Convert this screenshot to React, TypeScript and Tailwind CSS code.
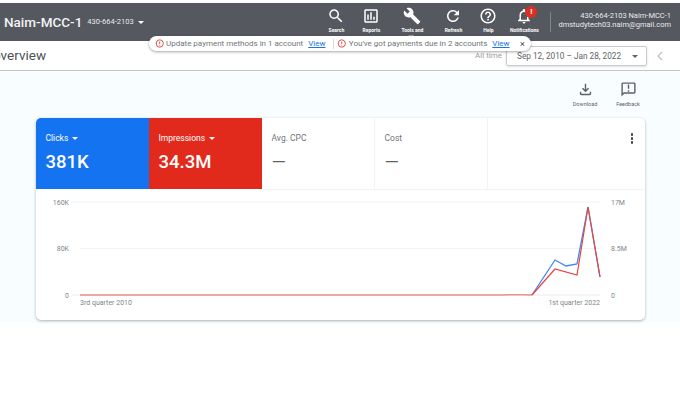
import { MdChevronLeft, MdClose, MdErrorOutline, MdHelpOutline, MdOutlineAnnouncement, MdOutlineAssessment, MdOutlineFileDownload, MdOutlineNotifications, MdBuild, MdRefresh, MdSearch } from "react-icons/md";

const navItems = [
  { label: "Search", icon: MdSearch, w: "w-[34px]" },
  { label: "Reports", icon: MdOutlineAssessment, w: "w-[36px]" },
  { label: "Tools and settings", icon: MdBuild, w: "w-[46px]" },
  { label: "Refresh", icon: MdRefresh, w: "w-[36px]" },
  { label: "Help", icon: MdHelpOutline, w: "w-[34px]" },
];

const Caret = ({ className }: { className: string }) => (
  <span className={`inline-block w-0 h-0 border-l-[3.5px] border-r-[3.5px] border-t-[3.5px] border-l-transparent border-r-transparent ${className}`} />
);

const Header = () => (
  <header className="h-[38px] mt-[3px] bg-[#55585f] flex items-center text-white shadow-sm">
    <div className="text-[13.5px] font-medium ml-[4px] text-[#f1f3f4]">Naim-MCC-1</div>
    <div className="text-[7.5px] ml-[5px] text-[#e8eaed]">430-664-2103</div>
    <Caret className="border-t-white ml-[4px]" />
    <nav className="flex items-start ml-auto self-start mt-[4px]">
      {navItems.map((item) => {
        const Icon = item.icon;
        return (
          <div key={item.label} className={`${item.w} flex flex-col items-center`}>
            <Icon className="w-[18px] h-[18px]" />
            <span className="w-[30px] text-center text-[5px] font-bold mt-[1.5px] leading-[7px]">{item.label}</span>
          </div>
        );
      })}
      <div className="relative w-[38px] flex flex-col items-center">
        <MdOutlineNotifications className="w-[18px] h-[18px]" />
        <span className="absolute top-[-1px] left-[20px] w-[12px] h-[12px] rounded-full bg-[#d93025] text-[8px] font-bold flex items-center justify-center">!</span>
        <span className="text-[5px] font-bold mt-[1.5px] leading-[7px]">Notifications</span>
      </div>
    </nav>
    <div className="w-px h-[20px] bg-[#80868b] mx-[7px]" />
    <div className="text-[7.5px] leading-[9px] text-right text-[#e8eaed] mr-[9px] mb-[4px]">
      <div>430-664-2103 Naim-MCC-1</div>
      <div>dmstudytech03.naim@gmail.com</div>
    </div>
  </header>
);

const SubBar = () => (
  <div className="relative h-[30px] bg-white border-b border-[#c4c6c9] flex items-center">
    <div className="text-[13.5px] text-[#4d5156] ml-[-7px]">overview</div>
    <div className="ml-auto flex items-center">
      <span className="text-[8px] text-[#9aa0a6] mr-[4px]">All time</span>
      <div className="w-[141px] h-[20px] mt-[1px] border border-[#c8cacc] rounded-[2px] shadow-sm flex items-center pl-[10px] pr-[8px] text-[8.25px] text-[#5f6368]">
        <span>Sep 12, 2010 – Jan 28, 2022</span>
        <Caret className="border-t-[#5f6368] ml-auto" />
      </div>
      <MdChevronLeft className="w-[18px] h-[18px] text-[#c4c7c9] ml-[4px] mr-[11px]" />
    </div>
    <div className="absolute left-[149px] top-[-5px] w-[382px] h-[15px] bg-white rounded-full shadow-[0_1px_3px_rgba(0,0,0,0.35)] flex items-center px-[5.5px] text-[8px] text-[#70757a] whitespace-nowrap">
      <MdErrorOutline className="w-[11px] h-[11px] text-[#d93025]" />
      <span className="ml-[2px]">Update payment methods in 1 account</span>
      <span className="ml-[5px] text-[#1a73e8] underline">View</span>
      <span className="w-px h-[10px] bg-[#dadce0] ml-[7px]" />
      <MdErrorOutline className="w-[11px] h-[11px] text-[#d93025] ml-[4px]" />
      <span className="ml-[2px]">You've got payments due in 2 accounts</span>
      <span className="ml-[5px] text-[#1a73e8] underline">View</span>
      <MdClose className="w-[8px] h-[8px] text-[#202124] ml-[9px]" />
    </div>
  </div>
);

const Tab = ({ label, value, bg, caret }: { label: string; value: string; bg: string; caret?: boolean }) => (
  <div className={`w-[113px] h-[71px] pl-[9.5px] pt-[15px] ${bg} ${caret ? "text-white" : "text-[#70757a] border-r border-[#f1f3f4]"}`}>
    <div className="flex items-center text-[8.5px] leading-[11px]">
      <span>{label}</span>
      {caret && <Caret className="border-t-white ml-[4px]" />}
    </div>
    <div className={`text-[18.5px] leading-[24px] mt-[6px] ${caret ? "font-medium" : "text-[#5f6368]"}`}>{value}</div>
  </div>
);

const AxisLabel = ({ y, anchor, x, text }: { y: number; anchor: "start" | "end" | "middle"; x: number; text: string }) => (
  <text x={x} y={y} textAnchor={anchor} fontSize="7" fill="#80868b" fontFamily="Roboto, sans-serif">{text}</text>
);

// drawn in page coords, viewBox starts at the card offset
const Chart = () => (
  <svg viewBox="36 189 609 131" className="block w-[609px] h-[131px]">
    <line x1="261" x2="645" y1="189.5" y2="189.5" stroke="#f1f3f4" />
    <line x1="72" x2="600" y1="202" y2="202" stroke="#f1f3f4" />
    <line x1="80" x2="600" y1="248.5" y2="248.5" stroke="#f1f3f4" />
    <line x1="72" x2="600" y1="295" y2="295" stroke="#e8eaed" />
    <polyline points="80,295 500,295 515,294.6 532,295" fill="none" stroke="#ec8f88" strokeWidth="1.4" />
    <polyline points="532,295 555,260 566,266 577,264 588,207 600,277" fill="none" stroke="#4285f4" strokeWidth="1.3" />
    <polyline points="532,295 555,269 577,275 588,207 600,277" fill="none" stroke="#e8453c" strokeWidth="1.2" />
    <AxisLabel x={69} y={204.5} anchor="end" text="160K" />
    <AxisLabel x={69} y={251} anchor="end" text="80K" />
    <AxisLabel x={69} y={297.5} anchor="end" text="0" />
    <AxisLabel x={611} y={204.5} anchor="start" text="17M" />
    <AxisLabel x={611} y={251} anchor="start" text="8.5M" />
    <AxisLabel x={611} y={297.5} anchor="start" text="0" />
    <AxisLabel x={80} y={305} anchor="start" text="3rd quarter 2010" />
    <AxisLabel x={600} y={305} anchor="end" text="1st quarter 2022" />
  </svg>
);

export default function App() {
  return (
    <div className="w-[680px] h-[409px] overflow-hidden bg-white" style={{ fontFamily: "Roboto, sans-serif" }}>
      <Header />
      <SubBar />
      <main className="h-[252px] bg-[#f8fdff] pt-[10px]">
        <div className="flex justify-end h-[37px] text-[#5f6368] pr-[29px]">
          <div className="w-[40px] flex flex-col items-center">
            <MdOutlineFileDownload className="w-[17px] h-[17px]" />
            <span className="text-[5.5px] mt-[2px]">Download</span>
          </div>
          <div className="w-[46px] flex flex-col items-center">
            <MdOutlineAnnouncement className="w-[17px] h-[17px]" />
            <span className="text-[5.5px] mt-[2px]">Feedback</span>
          </div>
        </div>
        <section className="ml-[36px] w-[609px] h-[202px] bg-white rounded-[5px] shadow-[0_1px_3px_rgba(60,64,67,0.4)] overflow-hidden">
          <div className="relative flex">
            <Tab label="Clicks" value="381K" bg="bg-[#1473f0]" caret />
            <Tab label="Impressions" value="34.3M" bg="bg-[#e1291c]" caret />
            <Tab label="Avg. CPC" value="—" bg="bg-white" />
            <Tab label="Cost" value="—" bg="bg-white" />
            <div className="absolute right-[12px] top-[15px] flex flex-col gap-[1.5px]">
              <span className="w-[2.5px] h-[2.5px] rounded-full bg-[#3c4043]" />
              <span className="w-[2.5px] h-[2.5px] rounded-full bg-[#3c4043]" />
              <span className="w-[2.5px] h-[2.5px] rounded-full bg-[#3c4043]" />
            </div>
          </div>
          <Chart />
        </section>
      </main>
    </div>
  );
}
